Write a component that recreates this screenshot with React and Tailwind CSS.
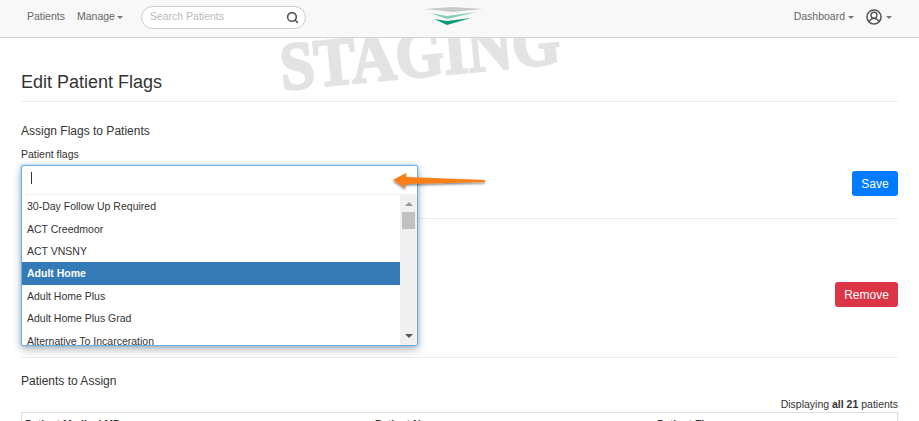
import React from "react";
import { Search } from "lucide-react";

const flags = [
  "30-Day Follow Up Required",
  "ACT Creedmoor",
  "ACT VNSNY",
  "Adult Home",
  "Adult Home Plus",
  "Adult Home Plus Grad",
  "Alternative To Incarceration",
];

function Caret({ className = "" }) {
  return (
    <span
      className={`inline-block w-0 h-0 border-x-[3.5px] border-x-transparent border-t-[3.5px] border-t-[#777] ${className}`}
    />
  );
}

function Navbar() {
  return (
    <nav className="relative z-10 h-[38px] pb-[3px] bg-[#f8f8f8] border-b border-[#d4d4d4] flex items-center text-[10.5px] text-[#666]">
      <a className="ml-[27px]">Patients</a>
      <a className="ml-[12px] flex items-center gap-[2px]">
        Manage <Caret />
      </a>
      <div className="ml-[18px] w-[165px] h-[23px] rounded-full border border-[#ccc] bg-white flex items-center justify-between pl-[8px] pr-[6px]">
        <span className="text-[#bbb] text-[10.5px]">Search Patients</span>
        <Search size={13} strokeWidth={3} className="text-[#555]" />
      </div>
      <svg className="absolute left-[423px] top-[6px]" width="61" height="20" viewBox="0 0 61 20">
        <polygon points="1,3 30,1 60,3 30,6" fill="#c9c9c9" />
        <polygon points="7,7 24,10 54,6 24,13" fill="#7fcfb9" />
        <polygon points="11,13 24,15 48,12 24,19" fill="#0d9b7c" />
      </svg>
      <div className="ml-auto flex items-center">
        <a className="flex items-center gap-[3px]">
          Dashboard <Caret />
        </a>
        <svg className="ml-[12px]" width="16" height="16" viewBox="0 0 16 16">
          <circle cx="8" cy="8" r="7" fill="white" stroke="#555" strokeWidth="1.6" />
          <circle cx="8" cy="6.2" r="3" fill="none" stroke="#555" strokeWidth="1.4" />
          <path d="M3 13c1-3 3-3.5 5-3.5s4 .5 5 3.5" fill="none" stroke="#555" strokeWidth="1.3" />
        </svg>
        <Caret className="ml-[4px] mr-[27px]" />
      </div>
    </nav>
  );
}

function FlagDropdown() {
  return (
    <div className="absolute left-[21px] top-[165px] w-[397px] h-[181px] bg-white border border-[#66afe9] rounded-[2px] shadow-[0_4px_10px_rgba(0,0,0,0.25),0_0_4px_rgba(102,175,233,0.6)] overflow-hidden flex flex-col text-[10.5px] text-[#333]">
      <div className="h-[29px] shrink-0 border-b border-[#f2f2f2] pl-[9px] pb-[5px] flex items-center">
        <span className="w-px h-[12px] bg-[#333]" />
      </div>
      <div className="flex flex-1 min-h-0">
        <ul className="flex-1 overflow-hidden">
          {flags.map((flag) =>
            flag === "Adult Home" ? (
              <li key={flag} className="h-[22.4px] pl-[5px] pt-[1px] flex items-center bg-[#337ab7] text-white font-bold">
                {flag}
              </li>
            ) : (
              <li key={flag} className="h-[22.4px] pl-[5px] pt-[2px] flex items-center">
                {flag}
              </li>
            )
          )}
        </ul>
        <div className="w-[17px] bg-[#f0f0f0] flex flex-col items-center relative">
          <span className="mt-[7px] w-0 h-0 border-x-[4px] border-x-transparent border-b-[4px] border-b-[#999]" />
          <span className="mt-[6px] w-[13px] h-[17px] bg-[#c1c1c1]" />
          <span className="absolute bottom-[7px] w-0 h-0 border-x-[4px] border-x-transparent border-t-[4px] border-t-[#555]" />
        </div>
      </div>
    </div>
  );
}

function Arrow() {
  return (
    <svg className="absolute left-[390px] top-[170px]" width="100" height="24" viewBox="0 0 100 24">
      <defs>
        <filter id="arrowShadow" x="-10%" y="-30%" width="120%" height="170%">
          <feDropShadow dx="0" dy="1.5" stdDeviation="1" floodColor="#000" floodOpacity="0.5" />
        </filter>
      </defs>
      <polygon points="3,10 16,3 16,7 95,10 95,12 16,14 15,18" fill="#f97f17" filter="url(#arrowShadow)" />
    </svg>
  );
}

export default function App() {
  return (
    <div
      className="relative h-[421px] w-[919px] overflow-hidden bg-white text-[#333]"
      style={{ fontFamily: '"Liberation Sans", Arial, sans-serif' }}
    >
      <Navbar />
      <div
        className="absolute left-[280px] top-[33px] text-[68px] leading-none font-bold text-[#e3e3e3] origin-left -rotate-[5.5deg] scale-x-[0.91] [-webkit-text-stroke:2.5px_#e3e3e3]"
        style={{ fontFamily: '"Liberation Serif", serif' }}
      >
        STAGING
      </div>
      <main className="relative px-[21px]">
        <h1 className="pt-[33px] pb-[8px] text-[18px] leading-[22px] text-[#333] border-b border-[#eee]">Edit Patient Flags</h1>
        <section className="h-[117px] border-b border-[#eee] relative">
          <h2 className="pt-[22px] text-[12px] leading-[14px]">Assign Flags to Patients</h2>
          <label className="block mt-[10px] text-[10.5px] leading-[12px]">Patient flags</label>
          <div className="flex justify-end mt-[11px]">
            <button className="w-[46px] h-[25px] rounded-[3px] bg-[#007bff] text-white text-[12px]">Save</button>
          </div>
        </section>
        <section className="h-[139px] border-b border-[#eee] flex justify-end pt-[63px]">
          <button className="w-[63px] h-[25px] rounded-[3px] bg-[#dc3545] text-white text-[12px]">Remove</button>
        </section>
        <h2 className="pt-[16px] text-[12px] leading-[14px]">Patients to Assign</h2>
        <p className="mt-[10px] text-right text-[10.5px] leading-[12px]">
          Displaying <b>all 21</b> patients
        </p>
        <div className="mt-[2px] border border-[#ddd] grid grid-cols-[350px_282px_1fr] px-[3px] pt-[4px] text-[10.5px] font-bold">
          <span>Patient Medical MD</span>
          <span>Patient Name</span>
          <span>Patient Flags</span>
        </div>
      </main>
      <FlagDropdown />
      <Arrow />
    </div>
  );
}
